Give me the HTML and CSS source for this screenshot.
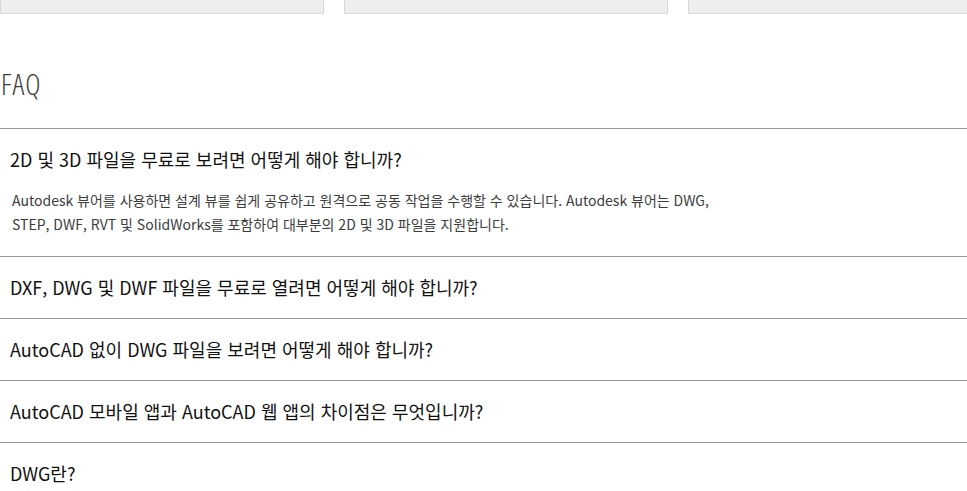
FILE: index.html
```html
<!DOCTYPE html>
<html lang="ko">
<head>
<meta charset="utf-8">
<title>FAQ</title>
<link rel="stylesheet" href="styles.css">
</head>
<body>
<div class="cards">
  <div class="card"></div>
  <div class="card"></div>
  <div class="card"></div>
</div>
<section class="faq">
  <h2 class="faq-title">FAQ</h2>
  <div class="faq-list">
    <div class="faq-item open">
      <div class="faq-q">2D 및 3D 파일을 무료로 보려면 어떻게 해야 합니까?</div>
      <div class="faq-a">Autodesk 뷰어를 사용하면 설계 뷰를 쉽게 공유하고 원격으로 공동 작업을 수행할 수 있습니다. Autodesk 뷰어는 DWG, STEP, DWF, RVT 및 SolidWorks를 포함하여 대부분의 2D 및 3D 파일을 지원합니다.</div>
    </div>
    <div class="faq-item">
      <div class="faq-q">DXF, DWG 및 DWF 파일을 무료로 열려면 어떻게 해야 합니까?</div>
    </div>
    <div class="faq-item">
      <div class="faq-q">AutoCAD 없이 DWG 파일을 보려면 어떻게 해야 합니까?</div>
    </div>
    <div class="faq-item">
      <div class="faq-q">AutoCAD 모바일 앱과 AutoCAD 웹 앱의 차이점은 무엇입니까?</div>
    </div>
    <div class="faq-item">
      <div class="faq-q">DWG란?</div>
    </div>
  </div>
</section>
</body>
</html>
```

FILE: styles.css
```css
html, body {
  margin: 0;
  padding: 0;
  background: #ffffff;
}
body {
  font-family: "Noto Sans CJK KR", "Noto Sans", sans-serif;
  color: #000;
  overflow: hidden;
}
.cards {
  display: flex;
  gap: 20px;
  height: 14px;
}
.card {
  flex: 0 0 324px;
  box-sizing: border-box;
  height: 14px;
  background: #eeeeee;
  border: 1px solid #d9d9d9;
  border-top: none;
}
.faq-title {
  margin: 0;
  padding: 52px 0 0 1px;
  height: 62px;
  font-family: "Open Sans", "Noto Sans", sans-serif;
  font-stretch: 87.5%;
  font-weight: 300;
  font-size: 29px;
  line-height: 36px;
  letter-spacing: 1px;
  color: #3c3c3c;
}
.faq-list {
  border-bottom: 1px solid #999;
}
.faq-item {
  border-top: 1px solid #999;
}
.faq-q {
  padding: 17px 10px 18px;
  font-size: 18px;
  line-height: 26px;
  color: #111;
}
.faq-item.open .faq-q {
  padding-bottom: 16px;
}
.faq-a {
  max-width: 725px;
  padding: 0 12px 20px;
  font-size: 14px;
  line-height: 24px;
  color: #3c3c3c;
}
```
